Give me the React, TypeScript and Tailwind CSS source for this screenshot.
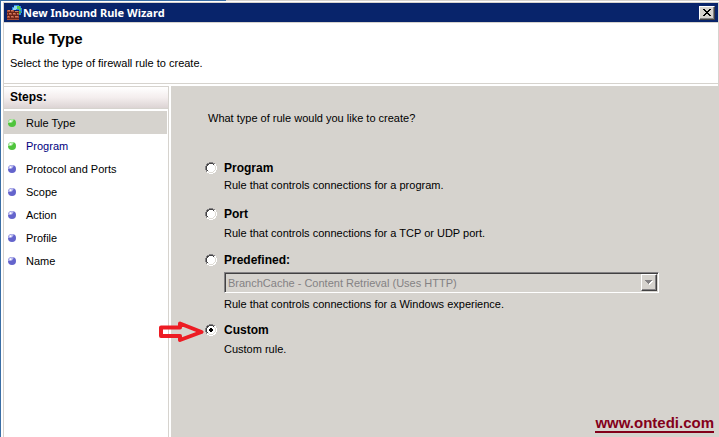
import { useState } from 'react'

interface Step {
  label: string
  done: boolean
  color: string
}

interface RuleOption {
  id: string
  title: string
  description: string
  gap: string
}

const STEPS: Step[] = [
  { label: 'Rule Type', done: true, color: 'text-black' },
  { label: 'Program', done: true, color: 'text-[#000080]' },
  { label: 'Protocol and Ports', done: false, color: 'text-black' },
  { label: 'Scope', done: false, color: 'text-black' },
  { label: 'Action', done: false, color: 'text-black' },
  { label: 'Profile', done: false, color: 'text-black' },
  { label: 'Name', done: false, color: 'text-black' },
]

const OPTIONS: RuleOption[] = [
  { id: 'program', title: 'Program', description: 'Rule that controls connections for a program.', gap: 'pt-px pb-[13px]' },
  { id: 'port', title: 'Port', description: 'Rule that controls connections for a TCP or UDP port.', gap: 'pt-[3px] pb-[11px]' },
  { id: 'predefined', title: 'Predefined:', description: 'Rule that controls connections for a Windows experience.', gap: 'pt-[3px] pb-2.5' },
  { id: 'custom', title: 'Custom', description: 'Custom rule.', gap: 'pt-[3px]' },
]

function FirewallIcon() {
  return (
    <svg className="h-4 w-4 shrink-0" viewBox="0 0 16 16" shapeRendering="crispEdges" aria-hidden="true">
      <path d="M7 0h5v1h2v2h1v5h-1v2h-2V5H5V2h2z" fill="#2a84e4" />
      <path d="M7 1h3v1h1v2H9v1H6V3h1z" fill="#8fd8f0" />
      <path d="M10 1h3v2h1v2h-2V4h-2z" fill="#5ccf4e" />
      <path d="M12 6h2v2h-1v1h-1z" fill="#39b54a" />
      <path d="M0 5h7v1h5v9H0z" fill="#a84a35" />
      <path d="M0 7h12v1H0zM0 10h12v1H0zM0 13h12v1H0zM3 5h1v2H3zM7 6h1v1H7zM5 8h1v2H5zM9 8h1v2H9zM1 8h1v2H1zM3 11h1v2H3zM7 11h1v2H7z" fill="#6b2418" />
      <path d="M1 5h2v1H1zM4 5h2v1H4zM8 6h3v1H8zM2 8h2v1H2zM6 8h2v1H6zM10 8h1v1h-1zM1 11h1v1H1zM4 11h2v1H4zM8 11h3v1H8z" fill="#cf7a62" />
    </svg>
  )
}

function Bullet({ done }: { done: boolean }) {
  return (
    <svg className="h-[9px] w-[9px] shrink-0" viewBox="0 0 9 9" aria-hidden="true">
      <circle cx="4" cy="5" r="4" fill={done ? '#4fc43c' : '#6464cc'} />
      <path d="M0 5A4 4 0 0 1 6 1.6L4 4.5z" fill={done ? '#b4ecac' : '#b8b8ee'} />
      <circle cx="2.5" cy="3.2" r="1" fill="#fff" />
    </svg>
  )
}

function RadioMark({ checked }: { checked: boolean }) {
  return (
    <svg
      className="pointer-events-none absolute inset-0 h-3 w-3"
      viewBox="0 0 12 12"
      shapeRendering="crispEdges"
      aria-hidden="true"
    >
      <path d="M4 1h4v1h2v2h1v4h-1v2H8v1H4v-1H2V8H1V4h1V2h2z" fill="#fff" />
      <path d="M4 0h4v1H4zM2 1h2v1H2zM8 1h2v1H8zM1 2h1v2H1zM0 4h1v4H0zM1 8h1v2H1z" fill="#848284" />
      <path d="M4 1h4v1H4zM2 2h2v1H3v1H2zM8 2h1v1H8zM1 4h1v4H1zM2 8h1v1H2z" fill="#424142" />
      <path d="M10 2h1v2h-1zM11 4h1v4h-1zM10 8h1v2h-1zM8 10h2v1H8zM4 11h4v1H4zM2 10h2v1H2z" fill="#fff" />
      <path d="M9 3h1v1H9zM10 4h1v4h-1zM9 8h1v1H9zM8 9h1v1H8zM4 10h4v1H4zM3 9h1v1H3z" fill="#dedbd5" />
      {checked && <path d="M5 4h2v1h1v2H7v1H5V7H4V5h1z" fill="#000" />}
    </svg>
  )
}

function PointerArrow() {
  return (
    <svg className="pointer-events-none absolute -left-[47px] -top-[3px] h-[22px] w-[46px]" viewBox="0 0 46 22" aria-hidden="true">
      <path
        d="M3 6.5h19V2.5L43.5 11 22 19v-4H3z"
        fill="none"
        stroke="#ed1c24"
        strokeWidth="4"
        strokeLinejoin="round"
      />
    </svg>
  )
}

export default function App() {
  const [selected, setSelected] = useState('custom')

  return (
    <div className="flex min-h-screen flex-col border-l border-[#3a6ea5] bg-[#d6d3ce] font-['Liberation_Sans',Arial,sans-serif] text-[11px] leading-4 text-black">
      <div className="h-px w-[225px] bg-[#3a6ea5]" />
      <div className="flex flex-1 flex-col border-l-2 border-t border-white pt-px">
        <div className="flex flex-1 flex-col border-x border-[#d6d3ce] bg-white">
          <header className="flex h-[19px] items-center justify-between bg-[#08246b] px-[3px]">
            <div className="flex items-center">
              <FirewallIcon />
              <h1 className="font-['Noto_Sans',sans-serif] text-[11px] font-bold text-white">New Inbound Rule Wizard</h1>
            </div>
            <button
              type="button"
              aria-label="Close"
              className="flex h-[14px] w-4 items-center justify-center border border-b-[#404040] border-l-white border-r-[#404040] border-t-white bg-[#d6d3ce] shadow-[inset_-1px_-1px_0_#848284]"
            >
              <svg className="h-[7px] w-2" viewBox="0 0 8 7" shapeRendering="crispEdges" aria-hidden="true">
                <path
                  d="M0 0h2v1h1v1h2V1h1V0h2v1H7v1H6v1H5v1h1v1h1v1h1v1H6V6H5V5H3v1H2v1H0V6h1V5h1V4h1V3H2V2H1V1H0z"
                  fill="#000"
                />
              </svg>
            </button>
          </header>

          <div className="border-b border-t border-[#d6d3ce] pb-3 pl-1.5">
            <h2 className="pl-0.5 pt-1 text-[15px] font-bold leading-6">Rule Type</h2>
            <p className="pt-1">Select the type of firewall rule to create.</p>
          </div>

          <div className="flex flex-1 gap-0.5 pt-0.5">
            <nav className="w-[165px] shrink-0 border-r border-[#d6d3ce]" aria-label="Steps">
              <h3 className="border-b border-t border-[#d6d3ce] bg-gradient-to-b from-white via-[#f4eeee] to-[#dcd4d4] pl-1.5 text-[12px] font-bold leading-[21px]">
                Steps:
              </h3>
              <ul className="pr-px pt-0.5">
                {STEPS.map((step, i) => (
                  <li key={step.label} className={i === 0 ? 'bg-[#d6d3ce]' : 'bg-white'}>
                    <a href={`#step-${i + 1}`} className={`flex h-[23px] items-center gap-[9px] pl-1 ${step.color}`}>
                      <Bullet done={step.done} />
                      {step.label}
                    </a>
                  </li>
                ))}
              </ul>
            </nav>

            <main className="flex flex-1 flex-col bg-[#d6d3ce] pl-[34px] pt-6">
              <p id="question" className="pl-[3px]">
                What type of rule would you like to create?
              </p>

              <div role="radiogroup" aria-labelledby="question" className="pt-[34px]">
                {OPTIONS.map((option) => (
                  <div key={option.id}>
                    <div className="flex items-center gap-[7px]">
                      <span className="relative h-3 w-3 shrink-0">
                        <input
                          id={option.id}
                          type="radio"
                          name="rule-type"
                          checked={selected === option.id}
                          onChange={() => setSelected(option.id)}
                          className="absolute inset-0 h-3 w-3 appearance-none"
                        />
                        <RadioMark checked={selected === option.id} />
                        {option.id === 'custom' && <PointerArrow />}
                      </span>
                      <label htmlFor={option.id} className="text-[12px] font-bold leading-4">
                        {option.title}
                      </label>
                    </div>
                    {option.id === 'predefined' && (
                      <div className="relative ml-[19px] mr-[59px] mt-1">
                        <select
                          disabled
                          aria-label="Predefined rule"
                          className="block h-[21px] w-full appearance-none border border-b-white border-l-[#848284] border-r-white border-t-[#848284] bg-[#d6d3ce] pl-[3px] text-[11px] text-[#848284] opacity-100 shadow-[inset_1px_1px_0_#424142]"
                        >
                          <option>BranchCache - Content Retrieval (Uses HTTP)</option>
                        </select>
                        <span className="pointer-events-none absolute bottom-0.5 right-0.5 top-0.5 flex w-4 items-center justify-center border border-b-[#424142] border-l-white border-r-[#424142] border-t-white bg-[#d6d3ce] shadow-[inset_-1px_-1px_0_#848284]">
                          <svg className="h-[5px] w-2" viewBox="0 0 8 5" shapeRendering="crispEdges" aria-hidden="true">
                            <path d="M1 1h7v1H7v1H6v1H5v1H4V4H3V3H2V2H1z" fill="#fff" />
                            <path d="M0 0h7v1H6v1H5v1H4v1H3V3H2V2H1V1H0z" fill="#848284" />
                          </svg>
                        </span>
                      </div>
                    )}
                    <p className={`pl-[19px] ${option.gap}`}>{option.description}</p>
                  </div>
                ))}
              </div>

              <a
                href="https://www.ontedi.com"
                className="mb-1 mr-1 mt-auto self-end border-b-2 border-[#84001a] text-[15px] font-bold leading-4 text-[#84001a]"
              >
                www.ontedi.com
              </a>
            </main>
          </div>
        </div>
      </div>
    </div>
  )
}
